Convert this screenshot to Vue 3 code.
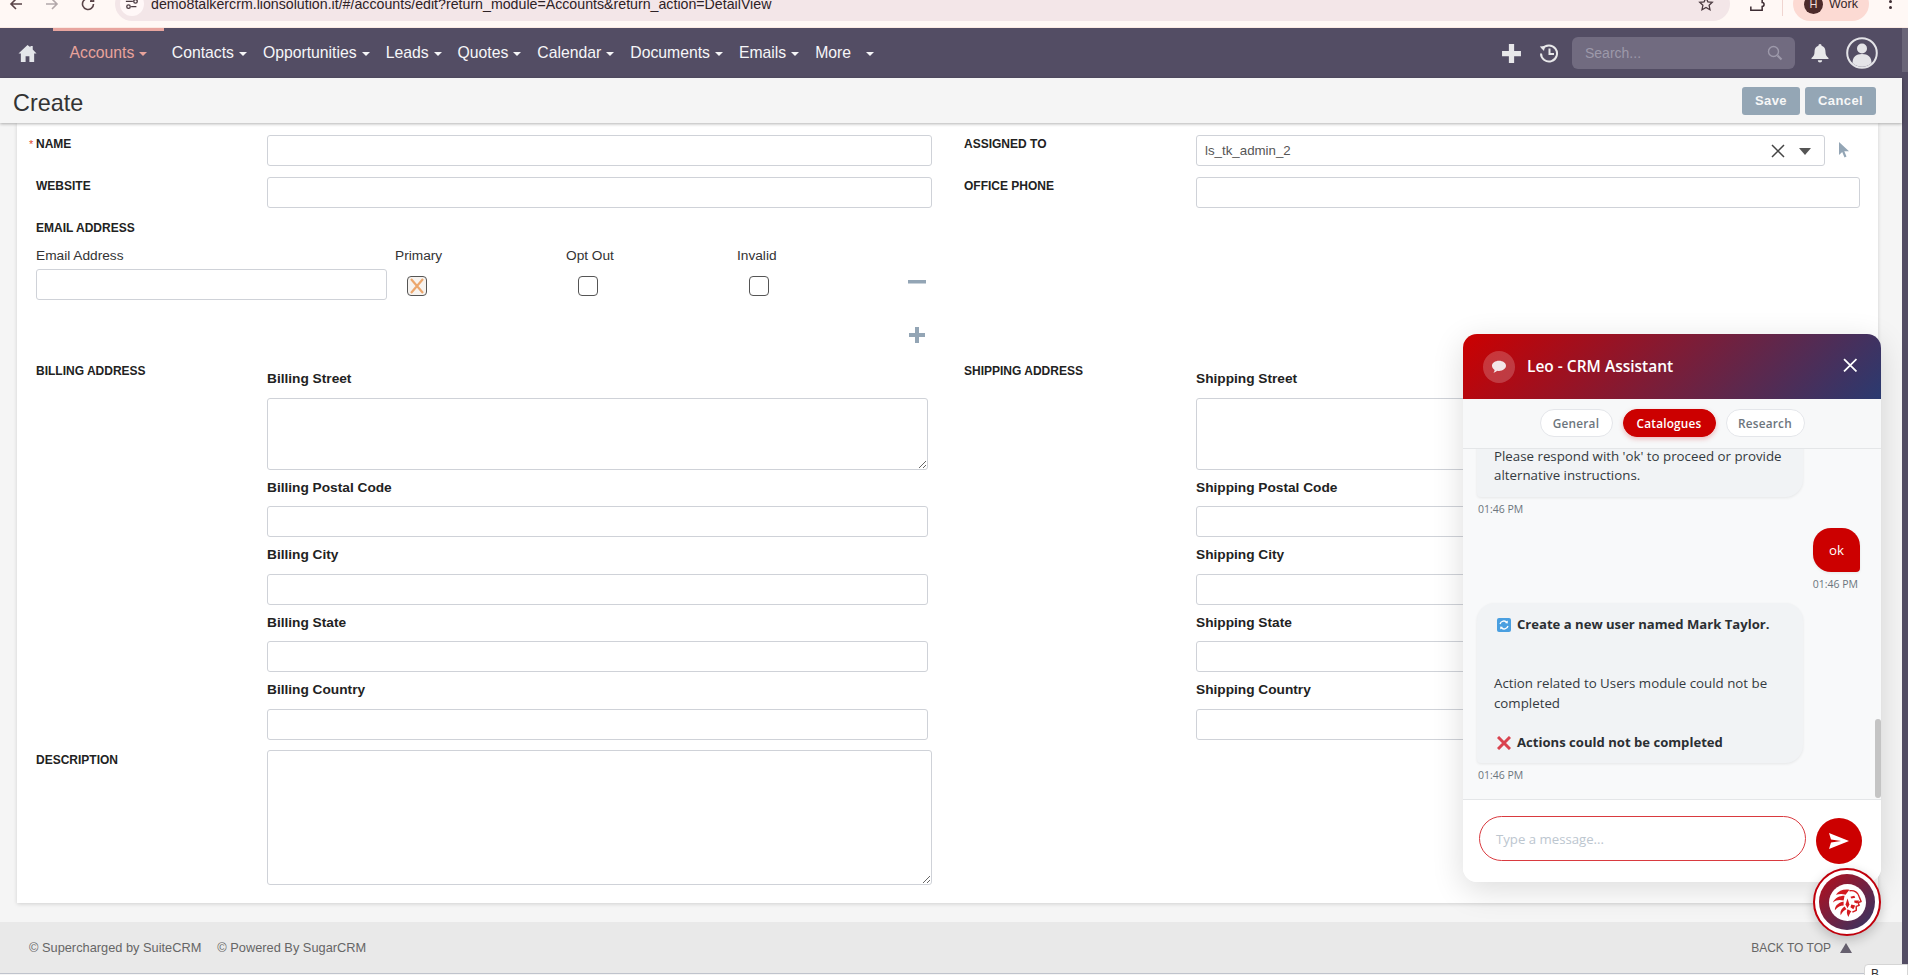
<script setup>
const navItems = ['Contacts', 'Opportunities', 'Leads', 'Quotes', 'Calendar', 'Documents', 'Emails']
const billing = [
  { label: 'Billing Street', area: true },
  { label: 'Billing Postal Code' },
  { label: 'Billing City' },
  { label: 'Billing State' },
  { label: 'Billing Country' }
]
const shipping = [
  { label: 'Shipping Street', area: true },
  { label: 'Shipping Postal Code' },
  { label: 'Shipping City' },
  { label: 'Shipping State' },
  { label: 'Shipping Country' }
]
const mane = [
  'M20 5C14 4 9 6 6 10c4-1 7-1 10 0z',
  'M15 11C10 11 5 13 3 18c4-3 7-3 11-2z',
  'M14 17C9 18 5 21 5 26c3-4 6-5 9-5z',
  'M15 22c-3 2-5 5-4 9 2-4 4-5 6-6z',
  'M18 25c-1 2-1 5 1 8 1-3 2-5 3-6z'
]
const face = [
  'M21 12l4-1 1 2-4 1z',
  'M25 16h5l-2 3-3-1z',
  'M22 20l4 1-2 4-3-2z',
  'M18 14l2 6-2 4-2-4z'
]
</script>

<template>
  <div class="page">
    <div class="chrome">
      <div class="chrome-inner">
        <svg class="c-ico" viewBox="0 0 16 16"><path d="M14 8H3M8 3 3 8l5 5" fill="none" stroke="#5a4448" stroke-width="1.6"/></svg>
        <svg class="c-ico fwd" viewBox="0 0 16 16"><path d="M2 8h11M8 3l5 5-5 5" fill="none" stroke="#b3a8aa" stroke-width="1.6"/></svg>
        <svg class="c-ico rel" viewBox="0 0 16 16"><path d="M13.5 8a5.5 5.5 0 1 1-1.6-3.9M13.5 1.5v3.6H10" fill="none" stroke="#5a4448" stroke-width="1.6"/></svg>
        <div class="omnibox">
          <span class="site-ico">
            <svg viewBox="0 0 16 16" width="14" height="14"><path d="M1 5h8M13 11H7" stroke="#4a3a40" stroke-width="1.5"/><circle cx="12" cy="5" r="2" fill="none" stroke="#4a3a40" stroke-width="1.5"/><circle cx="4" cy="11" r="2" fill="none" stroke="#4a3a40" stroke-width="1.5"/></svg>
          </span>
          <span class="url">demo8talkercrm.lionsolution.it/#/accounts/edit?return_module=Accounts&amp;return_action=DetailView</span>
          <svg class="star" viewBox="0 0 16 16"><path d="m8 1.8 1.9 4 4.4.5-3.2 3 .9 4.4L8 11.5l-4 2.2.9-4.4-3.2-3 4.4-.5z" fill="none" stroke="#4a3a40" stroke-width="1.3"/></svg>
        </div>
        <svg class="puzzle" viewBox="0 0 18 18"><path d="M3 3h4a2 2 0 0 1 4 0h4v4a2 2 0 0 1 0 4v4H3v-4" fill="none" stroke="#3d2c32" stroke-width="1.6"/></svg>
        <span class="c-sep"></span>
        <div class="profile"><span class="p-avatar">H</span><span class="p-name">Work</span></div>
        <span class="dots"><i></i><i></i></span>
      </div>
    </div>

    <div class="shell">
      <div class="content">
        <nav class="nav">
          <svg class="home" viewBox="0 0 20 20"><path d="M10 1 0.5 10H3v9h5v-6h4v6h5v-9h2.5L15.5 5.8V2h-2.4v1.5z" fill="#e4e6ea"/></svg>
          <a class="nav-item active">Accounts<i class="caret"></i></a>
          <a v-for="n in navItems" :key="n" class="nav-item">{{ n }}<i class="caret"></i></a>
          <a class="nav-item">More<i class="caret wide"></i></a>
          <div class="nav-right">
            <svg class="n-plus" viewBox="0 0 20 20"><path d="M10 1v18M1 10h18" stroke="#e8e8ea" stroke-width="5"/></svg>
            <svg class="n-hist" viewBox="0 0 20 20"><path d="M3.4 6A8 8 0 1 1 2 10.5" fill="none" stroke="#e8e8ea" stroke-width="2"/><path d="M0.8 3.5 6 3l-1 5z" fill="#e8e8ea"/><path d="M10.5 5.5V11H15" fill="none" stroke="#e8e8ea" stroke-width="2"/></svg>
            <div class="search">
              <span>Search...</span>
              <svg viewBox="0 0 16 16" width="16" height="16"><circle cx="6.5" cy="6.5" r="5" fill="none" stroke="#9d99aa" stroke-width="1.4"/><path d="m10.5 10.5 4 4" stroke="#9d99aa" stroke-width="2.2"/></svg>
            </div>
            <svg class="n-bell" viewBox="0 0 20 20"><path d="M10 1a1.6 1.6 0 0 1 1.6 1.7C14.5 3.5 15.5 6 15.5 9c0 3 1 4.500 3 6v1h-17v-1c2-1.500 3-3 3-6 0-3 1-5.500 3.900-6.300A1.600 1.600 0 0 1 10 1zM7.800 17.200h4.400A2.200 2.200 0 0 1 7.800 17.200z" fill="#e8e8ea"/></svg>
            <svg class="n-user" viewBox="0 0 32 32"><circle cx="16" cy="16" r="14.800" fill="none" stroke="#e4e4e8" stroke-width="2"/><circle cx="16" cy="11.500" r="5" fill="#e4e4e8"/><path d="M6.500 26c0-6 3.500-9 9.500-9s9.500 3 9.500 9a14 14 0 0 1-19 0z" fill="#e4e4e8"/></svg>
          </div>
        </nav>

        <header class="titlebar">
          <h1>Create</h1>
          <div class="actions">
            <button class="btn save">Save</button>
            <button class="btn">Cancel</button>
          </div>
        </header>

        <main class="main">
          <section class="card">
            <div class="row">
              <div class="col left">
                <label class="lbl"><span class="req">*</span>NAME</label>
                <input class="inp full-l" type="text" />
              </div>
              <div class="col right">
                <label class="lbl">ASSIGNED TO</label>
                <div class="assigned">
                  <span>ls_tk_admin_2</span>
                  <svg class="clear" viewBox="0 0 14 14"><path d="m1 1 12 12M13 1 1 13" stroke="#444" stroke-width="1.5"/></svg>
                  <i class="sel-caret"></i>
                </div>
                <svg class="pick" viewBox="0 0 12 16"><path d="M1 0v13l3.200-3 2.300 5.500 2-1L6.300 9.200H11z" fill="#93a5b5"/></svg>
              </div>
            </div>
            <div class="row">
              <div class="col left">
                <label class="lbl">WEBSITE</label>
                <input class="inp full-l" type="text" />
              </div>
              <div class="col right">
                <label class="lbl">OFFICE PHONE</label>
                <input class="inp full-r" type="text" />
              </div>
            </div>

            <div class="email">
              <div class="lbl email-title">EMAIL ADDRESS</div>
              <div class="email-grid">
                <span class="eh">Email Address</span>
                <span class="eh">Primary</span>
                <span class="eh">Opt Out</span>
                <span class="eh">Invalid</span>
                <span></span>
                <input class="inp email-inp" type="text" />
                <span class="cb checked">
                  <svg viewBox="0 0 18 18" width="18" height="18"><path d="m3 2 12 14M15 2 3 16" stroke="#eca66c" stroke-width="2.200"/></svg>
                </span>
                <span class="cb"></span>
                <span class="cb"></span>
                <svg class="minus" viewBox="0 0 18 4"><rect width="18" height="3.500" fill="#93a5b5"/></svg>
              </div>
              <svg class="plus" viewBox="0 0 18 16"><path d="M9 0v16M1 8h16" stroke="#93a5b5" stroke-width="4"/></svg>
            </div>

            <div class="row addr">
              <div class="col left">
                <label class="lbl">BILLING ADDRESS</label>
                <div class="addr-fields">
                  <div v-for="f in billing" :key="f.label" class="af">
                    <label>{{ f.label }}</label>
                    <textarea v-if="f.area" class="ta"></textarea>
                    <input v-else class="inp" type="text" />
                  </div>
                </div>
              </div>
              <div class="col right">
                <label class="lbl">SHIPPING ADDRESS</label>
                <div class="addr-fields ship">
                  <div v-for="f in shipping" :key="f.label" class="af">
                    <label>{{ f.label }}</label>
                    <textarea v-if="f.area" class="ta"></textarea>
                    <input v-else class="inp" type="text" />
                  </div>
                </div>
              </div>
            </div>

            <div class="row desc">
              <div class="col left">
                <label class="lbl">DESCRIPTION</label>
                <textarea class="ta desc-ta"></textarea>
              </div>
            </div>
          </section>
        </main>

        <footer class="footer">
          <span>© Supercharged by SuiteCRM</span>
          <span class="f2">© Powered By SugarCRM</span>
          <span class="top">BACK TO TOP<i class="top-tri"></i></span>
        </footer>
      </div>
      <div class="rail"></div>
    </div>

    <aside class="chat">
      <div class="chat-head">
        <span class="chat-av">
          <svg viewBox="0 0 20 18" width="16" height="14"><path d="M10 1c5 0 9 2.900 9 6.500S15 14 10 14c-.9 0-1.700-.1-2.500-.3C6.300 15 4.500 16 2.800 16c.9-.8 1.500-2 1.500-3.300C2.300 11.500 1 9.600 1 7.500 1 3.900 5 1 10 1z" fill="#f3e6e8"/></svg>
        </span>
        <span class="chat-title">Leo - CRM Assistant</span>
        <svg class="chat-x" viewBox="0 0 14 14"><path d="m1 1 12 12M13 1 1 13" stroke="#fff" stroke-width="1.700"/></svg>
      </div>
      <div class="chat-tabs">
        <span class="pill p1">General</span>
        <span class="pill p2 on">Catalogues</span>
        <span class="pill p3">Research</span>
      </div>
      <div class="msgs">
        <div class="bubble">Please respond with 'ok' to proceed or provide alternative instructions.</div>
        <div class="time">01:46 PM</div>
        <div class="bubble user">ok</div>
        <div class="time t-user">01:46 PM</div>
        <div class="bubble second">
          <div class="b-line">
            <svg class="emo" viewBox="0 0 14 14"><rect width="14" height="14" rx="2" fill="#4a9fe0"/><path d="M3 6a4 4 0 0 1 7-1.500M11 8a4 4 0 0 1-7 1.500" fill="none" stroke="#fff" stroke-width="1.300"/><path d="m10.800 2.500-.1 3-2.800-.4zM3.200 11.500l.1-3 2.800.4z" fill="#fff"/></svg>
            <b>Create a new user named Mark Taylor.</b>
          </div>
          <div class="b-body">Action related to Users module could not be completed</div>
          <div class="b-line">
            <svg class="emo" viewBox="0 0 14 14"><path d="m1 1 12 12M13 1 1 13" stroke="#d9434f" stroke-width="3"/></svg>
            <b>Actions could not be completed</b>
          </div>
        </div>
        <div class="time">01:46 PM</div>
        <i class="msg-thumb"></i>
      </div>
      <div class="chat-input">
        <div class="msg-input">Type a message...</div>
        <button class="send">
          <svg viewBox="0 0 22 18" width="22" height="18"><path d="M1 1 21 9 1 17l2-6.500L13 9 3 7.500z" fill="#fff"/></svg>
        </button>
      </div>
    </aside>

    <div class="fab">
      <div class="fab-disc">
        <span class="fab-face">
          <svg viewBox="0 0 36 36" width="35" height="35">
            <path v-for="d in mane" :key="d" :d="d" fill="#d41a1f"/>
            <path d="M20 6c5-1 9 2 10 6l2 5-3 1 1 3-3 1v4l-4 2" fill="none" stroke="#d41a1f" stroke-width="1.500" stroke-linejoin="round"/>
            <path v-for="d in face" :key="d" :d="d" fill="#d41a1f"/>
          </svg>
        </span>
      </div>
    </div>

    <div class="tip">B</div>
  </div>
</template>

<style scoped>
* { box-sizing: border-box; }
.page {
  position: relative;
  width: 1908px;
  height: 975px;
  overflow: hidden;
  background: #fff;
  font-family: "Liberation Sans", Arial, sans-serif;
  color: #333;
}

/* browser chrome */
.chrome { height: 28px; overflow: hidden; background: #fff8f5; border-bottom: 1px solid #fbeae3; }
.chrome-inner { display: flex; align-items: center; height: 34px; margin-top: -13px; }
.c-ico { width: 16px; height: 16px; margin-left: 8px; flex: none; }
.c-ico.fwd { margin-left: 20px; }
.c-ico.rel { margin-left: 20px; }
.omnibox {
  display: flex; align-items: center; flex: none;
  width: 1615px; height: 34px; margin-left: 19px;
  background: #f3e6e8; border-radius: 17px; padding: 0 16px 0 5px;
}
.site-ico {
  display: flex; align-items: center; justify-content: center;
  width: 24px; height: 24px; border-radius: 50%; background: #fff8f8;
}
.url { margin-left: 7px; font-size: 14.2px; color: #2e2226; white-space: nowrap; }
.star { width: 16px; height: 16px; margin-left: auto; margin-right: 0; }
.puzzle { width: 17px; height: 17px; margin-left: 18px; flex: none; }
.c-sep { width: 1px; height: 24px; background: #f0d5d0; margin-left: 17px; }
.profile {
  display: flex; align-items: center; margin-left: 10px;
  width: 76px; height: 34px; border-radius: 17px; background: #fcdad3; padding-left: 11px;
}
.p-avatar {
  display: flex; align-items: center; justify-content: center;
  width: 19px; height: 19px; border-radius: 50%; background: #4d2b2b; color: #f2dcd8; font-size: 11px;
}
.p-name { margin-left: 6px; font-size: 12.5px; color: #33262a; }
.dots { display: flex; flex-direction: column; gap: 3px; margin-left: 20px; }
.dots i { width: 3px; height: 3px; border-radius: 50%; background: #3d2c32; }

/* shell */
.shell { display: flex; height: 947px; }
.content { width: 1902px; flex: none; display: flex; flex-direction: column; background: #f5f5f5; }
.rail { flex: 1; background: linear-gradient(#6a6578 0 44px, #534d64 44px); }

/* nav */
.nav { display: flex; align-items: center; height: 50px; background: #534d64; flex: none; position: relative; }
.home { width: 19px; height: 19px; margin-left: 18px; margin-right: 16px; flex: none; }
.nav-item {
  display: flex; align-items: center; height: 50px; padding: 0 8px;
  font-size: 15.75px; color: #f6f6f8; white-space: nowrap;
}
.nav-item.active {
  color: #e9a39b; padding: 0 16.500px; border-top: 3px solid #e8a59f; padding-bottom: 3px;
}
.caret {
  width: 0; height: 0; margin-left: 5px; margin-top: 2px;
  border-left: 4px solid transparent; border-right: 4px solid transparent; border-top: 4px solid currentColor;
}
.caret.wide { margin-left: 15px; }
.nav-right { position: absolute; left: 1501px; right: 0; top: 0; height: 50px; display: flex; align-items: center; }
.n-plus { width: 21px; height: 21px; flex: none; }
.n-hist { width: 20px; height: 20px; margin-left: 17px; flex: none; }
.search {
  display: flex; align-items: center; justify-content: space-between;
  width: 223px; height: 32px; margin-left: 13px; padding: 0 12px 0 13px;
  background: #716b80; border-radius: 6px; font-size: 14px; color: #9d99aa;
}
.n-bell { width: 20px; height: 20px; margin-left: 15px; flex: none; }
.n-user { width: 32px; height: 32px; margin-left: 16px; flex: none; }

/* title bar */
.titlebar {
  display: flex; align-items: center; justify-content: space-between;
  height: 45px; background: #f5f5f5; padding: 0 26px 0 13px; flex: none;
  box-shadow: 0 1px 3px rgba(0,0,0,.3); position: relative;
}
.titlebar h1 { margin: 6px 0 0; font-size: 23.4px; font-weight: 400; color: #333; }
.actions { display: flex; gap: 5px; }
.btn {
  height: 28px; border: 0; border-radius: 3px; background: #94a6b5; color: #f7f7f7;
  font-family: inherit; font-size: 13px; font-weight: 700; letter-spacing: .4px; padding: 0 13px;
  width: 71px;
}
.btn.save { width: 58px; }

/* form */
.main { flex: 1; padding-left: 17px; min-height: 0; }
.card {
  width: 1861px; background: #fff; padding-top: 12px; padding-bottom: 18px;
  box-shadow: 0 1px 4px rgba(0,0,0,.15);
}
.row { display: flex; margin-bottom: 11px; }
.col { display: flex; align-items: flex-start; position: relative; }
.col.left { width: 946px; padding-left: 19px; }
.col.right { width: 915px; padding-left: 1px; }
.lbl {
  position: relative; flex: none; width: 231px; padding-top: 2px;
  font-size: 12px; line-height: 14px; font-weight: 700; color: #222;
}
.col.right .lbl { width: 232px; }
.req { position: absolute; left: -7px; top: 2px; color: #e0492c; font-weight: 400; font-size: 11px; }
.inp {
  display: block; width: 661px; height: 31px; padding: 0 8px;
  border: 1px solid #cfd2d8; border-radius: 3px; background: #fff; outline: 0; font-family: inherit;
}
.inp.full-l { width: 665px; }
.inp.full-r { width: 664px; }
.assigned {
  display: flex; align-items: center; width: 629px; height: 31px; padding: 0 13px 0 8px;
  border: 1px solid #cfd2d8; border-radius: 3px; font-size: 13.3px; color: #555;
}
.clear { width: 14px; height: 14px; margin-left: auto; }
.sel-caret {
  width: 0; height: 0; margin-left: 14px; margin-top: 2px;
  border-left: 6px solid transparent; border-right: 6px solid transparent; border-top: 7px solid #555;
}
.pick { width: 12px; height: 16px; margin-left: 13px; margin-top: 7px; }

.email { padding-left: 19px; margin-top: 13px; height: 141px; }
.email-title { display: block; width: auto; padding-top: 0; margin-bottom: 13px; }
.email-grid {
  display: grid; grid-template-columns: 359px 171px 171px 171px 30px;
  grid-template-rows: 16px 31px; row-gap: 5px; align-items: start;
}
.eh { font-size: 13.7px; line-height: 16px; color: #333; }
.email-inp { width: 351px; }
.cb {
  display: flex; align-items: center; justify-content: center;
  width: 20px; height: 20px; margin: 7px 0 0 12px;
  border: 1.5px solid #555; border-radius: 4px; background: #fff;
}
.cb.checked { background: #f7f3ef; }
.minus { width: 18px; height: 4px; margin-top: 11px; }
.plus { display: block; width: 18px; height: 16px; margin: 27px 0 0 872px; }

.addr { margin-bottom: 10.5px; }
.addr-fields { display: flex; flex-direction: column; gap: 10px; padding-top: 9px; }
.af label { display: block; font-size: 13.7px; line-height: 16px; font-weight: 700; color: #222; margin-bottom: 10.5px; }
.ta {
  display: block; width: 661px; height: 72px; border: 1px solid #cfd2d8; border-radius: 3px;
  background: #fff; outline: 0; resize: both; font-family: inherit;
}
.desc { margin-bottom: 0; }
.desc .lbl { padding-top: 3px; }
.desc-ta { width: 665px; height: 135px; }

/* footer */
.footer {
  display: flex; align-items: center; flex: none; position: relative;
  height: 52px; margin-bottom: 1px; padding-left: 29px;
  background: #e9e9e9; border-bottom: 1px solid #bfc3cc;
  font-size: 12.8px; color: #666;
}
.f2 { margin-left: 16px; }
.top { margin-left: auto; margin-right: 50px; font-size: 12px; display: flex; align-items: center; }
.top-tri {
  width: 0; height: 0; margin-left: 9px;
  border-left: 6px solid transparent; border-right: 6px solid transparent; border-bottom: 10px solid #66606f;
}

/* chat */
.chat {
  position: absolute; left: 1463px; top: 334px; width: 418px; height: 548px;
  display: flex; flex-direction: column; overflow: hidden;
  border-radius: 14px; background: #fff;
  box-shadow: 0 8px 32px rgba(0,0,0,.14);
  font-family: "Open Sans", "Noto Sans", sans-serif;
}
.chat-head {
  display: flex; align-items: center; flex: none; height: 65px; padding-left: 20px;
  background: linear-gradient(135deg, #cc0000 0%, #2a3a70 100%);
}
.chat-av {
  display: flex; align-items: center; justify-content: center;
  width: 32px; height: 32px; border-radius: 50%; background: rgba(255,255,255,.2);
}
.chat-title { margin-left: 12px; margin-top: -2px; font-size: 15.5px; font-weight: 600; color: #fff; }
.chat-x { width: 14.500px; height: 14.500px; margin-left: auto; margin-right: 24px; margin-top: -3px; }
.chat-tabs {
  display: flex; justify-content: center; gap: 10px; flex: none; height: 50px; padding-top: 10px;
  background: #f7f8f9; border-bottom: 1px solid #e4e6e8;
}
.pill {
  display: flex; align-items: center; justify-content: center; height: 28px;
  border: 1px solid #e4e6ea; border-radius: 14px; background: #fff; padding-bottom: 1px;
  font-size: 11.8px; font-weight: 600; color: #6c757d; letter-spacing: .2px;
}
.p1 { width: 73px; }
.p2 { width: 93px; }
.p3 { width: 79px; }
.pill.on { background: #cc0000; border-color: #cc0000; color: #fff; box-shadow: 0 2px 5px rgba(204,0,0,.25); }
.msgs {
  position: relative; flex: none; height: 350px; overflow: hidden;
  display: flex; flex-direction: column; justify-content: flex-end; align-items: flex-start;
  padding: 0 21px 17px 14px; background: #f8f9fa;
}
.bubble {
  width: 326px; flex: none; padding: 40px 17px 12px; font-size: 13.3px; line-height: 19px;
  color: #343a40; background: #f1f3f5; border-radius: 18px 18px 18px 4px;
  box-shadow: 0 1px 3px rgba(0,0,0,.08);
}
.bubble.user {
  width: 47px; height: 44px; padding: 0; margin-left: auto;
  display: flex; align-items: center; justify-content: center;
  background: #cc0000; color: #fff; border-radius: 18px 18px 4px 18px;
}
.bubble.second { padding: 12px 17px 11px; }
.b-line { display: flex; align-items: center; height: 19px; }
.b-line b { font-weight: 700; color: #2b2f33; font-size: 13.1px; }
.emo { width: 14px; height: 14px; margin: 0 6px 0 3px; flex: none; }
.b-body { margin: 39px 0 20px; line-height: 20px; }
.time { font-size: 10.5px; line-height: 14px; color: #6c757d; margin: 5px 0 12px 1px; flex: none; }
.time:last-of-type { margin-bottom: 0; }
.t-user { margin-left: auto; margin-right: 2px; }
.msg-thumb {
  position: absolute; right: 0; top: 270px; width: 6px; height: 79px;
  border-radius: 3px; background: #c4c4c4;
}
.chat-input {
  display: flex; flex: 1; align-items: flex-start; background: #fff;
  border-top: 1px solid #e4e6e8; padding: 16px 0 0 16px;
}
.msg-input {
  width: 327px; height: 45px; padding: 0 16px; display: flex; align-items: center;
  border: 1.5px solid #d93a3f; border-radius: 23px; font-size: 13.2px; color: #bcc6cf;
}
.send {
  display: flex; align-items: center; justify-content: center;
  width: 46px; height: 46px; margin: 2px 0 0 10px; border: 0; padding: 0;
  border-radius: 50%; background: #cc0000;
}
.fab {
  position: absolute; left: 1813px; top: 868px; width: 68px; height: 68px;
  border-radius: 50%; background: #fff; border: 2.500px solid #c0000c;
  display: flex; align-items: center; justify-content: center;
  box-shadow: 0 4px 12px rgba(0,0,0,.2);
}
.fab-disc {
  display: flex; align-items: center; justify-content: center;
  width: 56px; height: 56px; border-radius: 50%;
  background: linear-gradient(135deg, #b80d1a, #2e3668);
}
.fab-face {
  display: flex; align-items: center; justify-content: center;
  width: 37px; height: 37px; border-radius: 50%; background: #fff;
}
.tip {
  position: absolute; left: 1864px; top: 964px; width: 44px; height: 30px;
  background: #fff; border: 1px solid #d5d5d5; border-radius: 4px 0 0 0;
  padding: 2px 0 0 6px; font-size: 12px; color: #333;
}
</style>

<style>
html, body { margin: 0; overflow: hidden; }
</style>
